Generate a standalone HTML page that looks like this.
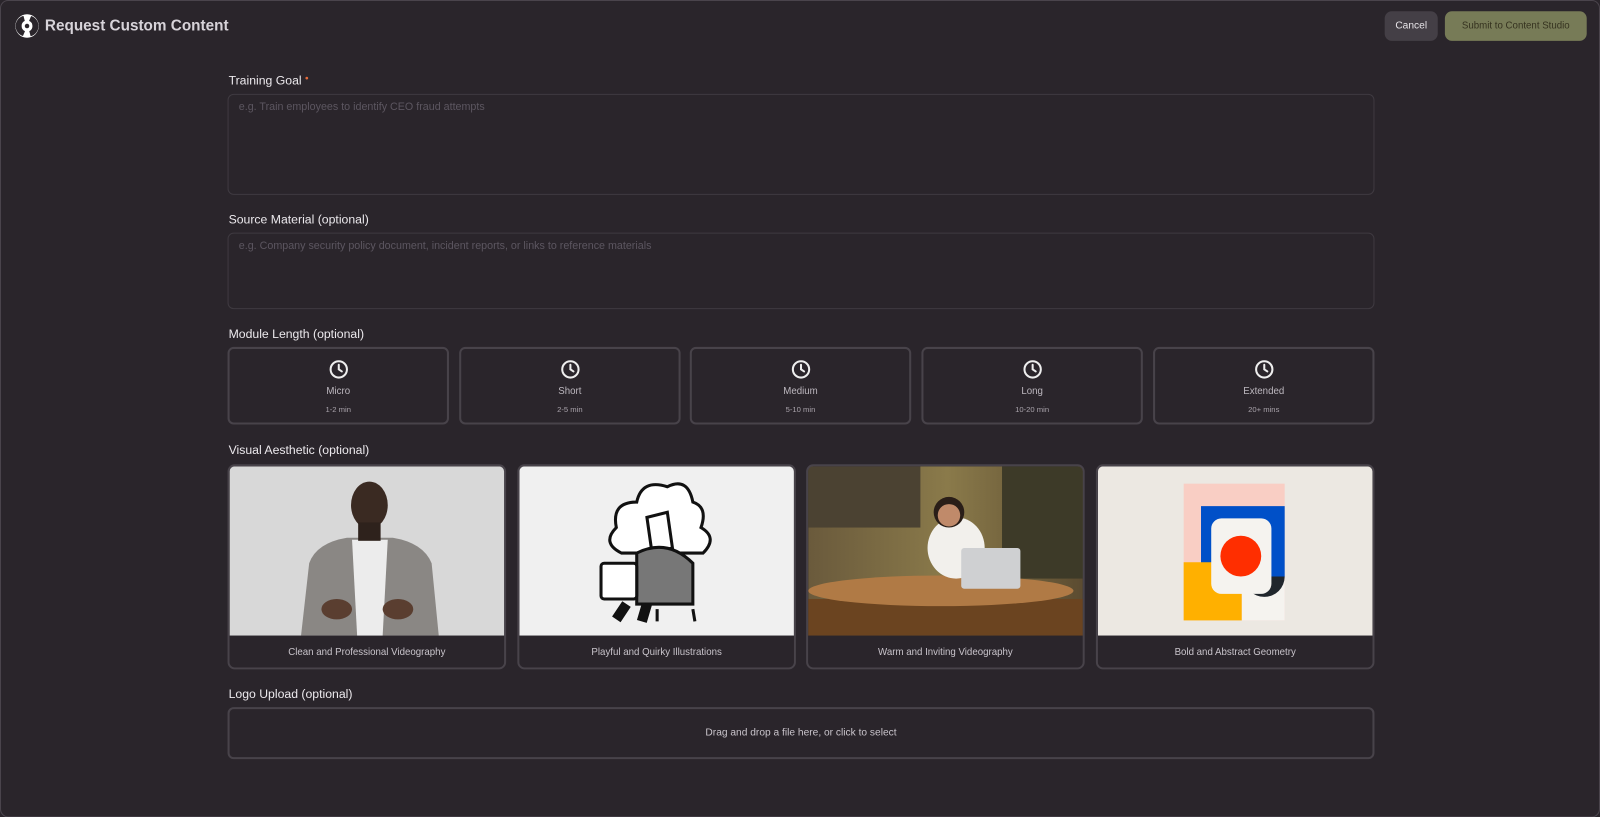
<!DOCTYPE html>
<html><head><meta charset="utf-8"><style>
*{box-sizing:border-box;margin:0;padding:0}
body{width:1600px;height:817px;background:#2a252b;font-family:"Liberation Sans",sans-serif;color:#e6e3e7;position:relative;overflow:hidden}
#w{position:absolute;left:0;top:0;width:1568px;height:801px;transform:scale(1.0204);transform-origin:0 0}
.frame{position:absolute;left:0;top:0;width:1568px;height:801px;border:1px solid #4a444c;border-radius:8px;pointer-events:none}
.abs{position:absolute}
.lbl{position:absolute;left:224px;font-size:12px;color:#ece9ed}
.ta{position:absolute;left:223px;width:1124px;border:1px solid #3f3a41;border-radius:6px;padding:6px 10px;font-size:10.5px;color:#5c5660}
.mc{position:absolute;top:340px;width:217px;height:76px;border:2px solid #48434a;border-radius:6px;text-align:center}
.mc svg{position:absolute;left:50%;top:10px;margin-left:-10px}
.mc .t{position:absolute;top:36px;width:100%;font-size:9.5px;color:#bdb8bf}
.mc .s{position:absolute;top:55px;width:100%;font-size:7.5px;color:#a9a3ab}
.vc{position:absolute;top:455px;width:273px;height:201px;border:2px solid #48434a;border-radius:7px;overflow:hidden}
.vc svg{display:block}
.vc .c{position:absolute;top:166px;left:0;width:100%;height:33px;line-height:33px;text-align:center;font-size:9.5px;color:#c9c4cb;background:#2a252b}
</style></head><body><div id="w">
<div class="frame"></div>
<svg class="abs" style="left:14px;top:13px" width="25" height="25" viewBox="0 0 25 25"><circle cx="12.5" cy="12.5" r="11.5" fill="#fff"/><path d="M9 2.5 A10.3 10.3 0 0 0 8.5 22.3 L10.5 17.5 A5.5 5.5 0 0 1 10.3 7.5Z" fill="#2a252b"/><path d="M16 22.5 A10.3 10.3 0 0 0 16.5 2.7 L14.5 7.5 A5.5 5.5 0 0 1 14.7 17.5Z" fill="#2a252b"/><circle cx="12.5" cy="12.5" r="2.2" fill="#2a252b"/></svg>
<div class="abs" style="left:44px;top:17px;font-size:15px;font-weight:bold;color:#d7d3d9">Request Custom Content</div>
<div class="abs" style="left:1357px;top:11px;width:52px;height:29px;border-radius:7px;background:#443f46;font-size:10px;color:#e9e6ea;text-align:center;line-height:29px">Cancel</div>
<div class="abs" style="left:1416px;top:11px;width:139px;height:29px;border-radius:7px;background:#777b57;font-size:9.5px;color:#35321f;text-align:center;line-height:29px">Submit to Content Studio</div>

<div class="lbl" style="top:72px">Training Goal <span style="color:#e3693a;font-size:10px;vertical-align:top">•</span></div>
<div class="ta" style="top:92px;height:99px">e.g. Train employees to identify CEO fraud attempts</div>
<div class="lbl" style="top:208px">Source Material (optional)</div>
<div class="ta" style="top:228px;height:75px">e.g. Company security policy document, incident reports, or links to reference materials</div>
<div class="lbl" style="top:320px">Module Length (optional)</div>

<div class="mc" style="left:223px"><svg width="20" height="20" viewBox="0 0 20 20"><circle cx="10" cy="10" r="8" fill="none" stroke="#eee" stroke-width="2"/><path d="M10 5.5V10l3 2" fill="none" stroke="#eee" stroke-width="2" stroke-linecap="round"/></svg><div class="t">Micro</div><div class="s">1-2 min</div></div>
<div class="mc" style="left:450px"><svg width="20" height="20" viewBox="0 0 20 20"><circle cx="10" cy="10" r="8" fill="none" stroke="#eee" stroke-width="2"/><path d="M10 5.5V10l3 2" fill="none" stroke="#eee" stroke-width="2" stroke-linecap="round"/></svg><div class="t">Short</div><div class="s">2-5 min</div></div>
<div class="mc" style="left:676px"><svg width="20" height="20" viewBox="0 0 20 20"><circle cx="10" cy="10" r="8" fill="none" stroke="#eee" stroke-width="2"/><path d="M10 5.5V10l3 2" fill="none" stroke="#eee" stroke-width="2" stroke-linecap="round"/></svg><div class="t">Medium</div><div class="s">5-10 min</div></div>
<div class="mc" style="left:903px"><svg width="20" height="20" viewBox="0 0 20 20"><circle cx="10" cy="10" r="8" fill="none" stroke="#eee" stroke-width="2"/><path d="M10 5.5V10l3 2" fill="none" stroke="#eee" stroke-width="2" stroke-linecap="round"/></svg><div class="t">Long</div><div class="s">10-20 min</div></div>
<div class="mc" style="left:1130px"><svg width="20" height="20" viewBox="0 0 20 20"><circle cx="10" cy="10" r="8" fill="none" stroke="#eee" stroke-width="2"/><path d="M10 5.5V10l3 2" fill="none" stroke="#eee" stroke-width="2" stroke-linecap="round"/></svg><div class="t">Extended</div><div class="s">20+ mins</div></div>

<div class="lbl" style="top:434px">Visual Aesthetic (optional)</div>

<div class="vc" style="left:223px"><svg width="273" height="166"><rect width="273" height="166" fill="#d8d8d8"/><path d="M70 166 L78 95 Q85 75 115 70 L160 70 Q190 75 198 95 L205 166Z" fill="#8a8784"/><path d="M120 72 L155 72 L150 166 L125 166Z" fill="#ececec"/><ellipse cx="137" cy="38" rx="18" ry="23" fill="#3a2a22"/><rect x="126" y="55" width="22" height="18" fill="#2e221c"/><ellipse cx="105" cy="140" rx="15" ry="10" fill="#5a3e30"/><ellipse cx="165" cy="140" rx="15" ry="10" fill="#5a3e30"/></svg><div class="c">Clean and Professional Videography</div></div>
<div class="vc" style="left:507px"><svg width="273" height="166"><rect width="273" height="166" fill="#f0f0f0"/><path d="M95 60 Q90 35 115 35 Q120 12 145 20 Q165 10 170 35 Q185 40 178 60 Q195 70 180 85 L100 85 Q80 75 95 60Z" fill="#fff" stroke="#111" stroke-width="3"/><path d="M125 50 L145 45 L150 80 L130 85Z" fill="#fff" stroke="#111" stroke-width="3"/><path d="M115 85 Q145 70 170 95 L170 135 L115 135Z" fill="#777" stroke="#111" stroke-width="3"/><rect x="80" y="95" width="35" height="35" rx="3" fill="#fff" stroke="#111" stroke-width="3"/><path d="M105 135 L95 150 M125 135 L120 152" stroke="#111" stroke-width="10"/><path d="M135 140 L135 152 M170 140 L172 152" stroke="#111" stroke-width="3"/></svg><div class="c">Playful and Quirky Illustrations</div></div>
<div class="vc" style="left:790px"><svg width="273" height="166"><defs><linearGradient id="g" x1="0" y1="0" x2="1" y2="0"><stop offset="0" stop-color="#6a5a3c"/><stop offset=".5" stop-color="#8a7a4a"/><stop offset="1" stop-color="#5a4a30"/></linearGradient></defs><rect width="273" height="166" fill="url(#g)"/><rect x="0" y="0" width="110" height="60" fill="#4b4232"/><rect x="190" y="0" width="83" height="110" fill="#3d3a28"/><rect x="0" y="130" width="273" height="36" fill="#6b4420"/><ellipse cx="130" cy="122" rx="130" ry="15" fill="#b07a45"/><ellipse cx="145" cy="80" rx="28" ry="30" fill="#f2f0ec"/><circle cx="138" cy="45" r="15" fill="#2a1e18"/><circle cx="138" cy="48" r="11" fill="#c08a6a"/><rect x="150" y="80" width="58" height="40" rx="3" fill="#cfd0d2"/></svg><div class="c">Warm and Inviting Videography</div></div>
<div class="vc" style="left:1074px"><svg width="273" height="166"><rect width="273" height="166" fill="#ece8e2"/><rect x="84" y="17" width="99" height="134" fill="#f9cec4"/><rect x="101" y="39" width="82" height="69" fill="#0050c8"/><rect x="84" y="94" width="57" height="57" fill="#ffb000"/><rect x="141" y="108" width="42" height="43" fill="#f5f3ef"/><path d="M143 108 A20 20 0 0 0 183 108Z" fill="#20262c"/><rect x="111" y="51" width="59" height="74" rx="10" fill="#f5f3ef"/><circle cx="140" cy="88" r="20" fill="#ff2e00"/></svg><div class="c">Bold and Abstract Geometry</div></div>

<div class="lbl" style="top:673px">Logo Upload (optional)</div>
<div class="abs" style="left:223px;top:693px;width:1124px;height:51px;border:2px solid #48434a;border-radius:6px;text-align:center;line-height:47px;font-size:10px;color:#c9c4cb">Drag and drop a file here, or click to select</div>
</div></body></html>
